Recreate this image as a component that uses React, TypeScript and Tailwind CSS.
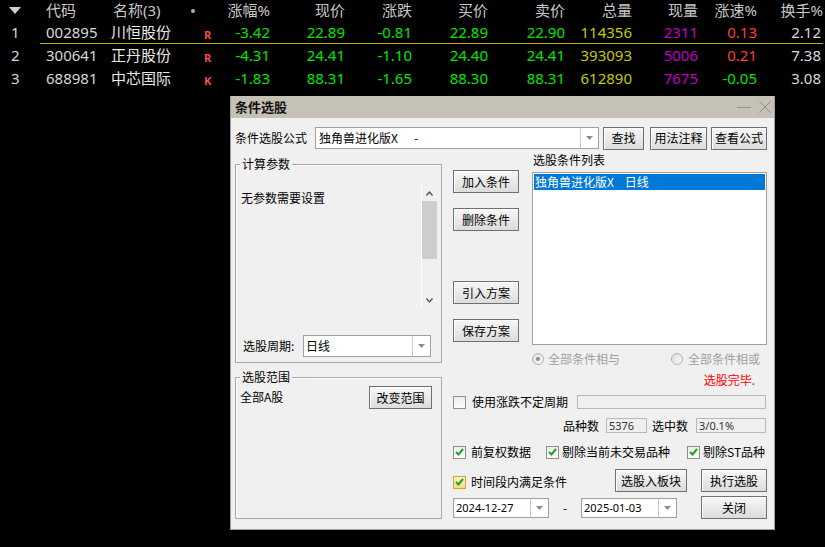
import React from 'react';

const rows = [
  { i: 1, code: '002895', name: '川恒股份', flag: 'R', pct: '-3.42', price: '22.89', chg: '-0.81', bid: '22.89', ask: '22.90', vol: '114356', cur: '2311', spd: '0.13', turn: '2.12' },
  { i: 2, code: '300641', name: '正丹股份', flag: 'R', pct: '-4.31', price: '24.41', chg: '-1.10', bid: '24.40', ask: '24.41', vol: '393093', cur: '5006', spd: '0.21', turn: '7.38' },
  { i: 3, code: '688981', name: '中芯国际', flag: 'K', pct: '-1.83', price: '88.31', chg: '-1.65', bid: '88.30', ask: '88.31', vol: '612890', cur: '7675', spd: '-0.05', turn: '3.08' },
];

const cols = 'grid grid-cols-[70px_80px_25px_55px_75px_67px_76px_77px_67px_66px_59px_66px] items-center';

const Arrow = () => (
  <svg width="7" height="4" viewBox="0 0 7 4">
    <path d="M0 0 L7 0 L3.5 4 Z" fill="#8a8a8a" />
  </svg>
);

const Btn: React.FC<{ label: string; className?: string }> = ({ label, className = '' }) => (
  <div
    className={`flex h-[23px] items-center justify-center border border-[#707070] bg-gradient-to-b from-[#f7f7f7] to-[#dcdcdc] text-black shadow-[inset_1px_1px_0_#fff] ${className}`}
  >
    {label}
  </div>
);

const Combo: React.FC<{ text: string; className?: string; textClass?: string }> = ({ text, className = '', textClass = '' }) => (
  <div className={`flex border border-[#a0a0a0] bg-white ${className}`}>
    <div className={`flex flex-1 items-center whitespace-pre pl-[2px] ${textClass}`}>{text}</div>
    <div className="flex w-[18px] items-center justify-center border-l border-[#c8c8c8]">
      <Arrow />
    </div>
  </div>
);

const Check: React.FC<{ checked?: boolean; hot?: boolean }> = ({ checked, hot }) => (
  <div
    className={`flex h-[13px] w-[13px] shrink-0 items-center justify-center border ${
      hot ? 'border-[#e0a030] bg-gradient-to-b from-[#fdf2c8] to-[#f6d88a]' : 'border-[#8e8f8f] bg-gradient-to-b from-[#eeeeee] to-[#fafafa]'
    }`}
  >
    {checked && (
      <svg width="9" height="8" viewBox="0 0 9 8">
        <path d="M1 4 L3.5 6.5 L8 1" stroke="#21a121" strokeWidth="2" fill="none" />
      </svg>
    )}
  </div>
);

const Radio: React.FC<{ on?: boolean }> = ({ on }) => (
  <div className="flex h-[12px] w-[12px] shrink-0 items-center justify-center rounded-full border border-[#b0b0b0] bg-gradient-to-br from-[#dcdcdc] to-[#fafafa]">
    {on && <div className="h-[4px] w-[4px] rounded-full bg-[#8a8a8a]" />}
  </div>
);

const GroupBox: React.FC<{ title: string; className?: string; boxClass: string; children: React.ReactNode }> = ({ title, className = '', boxClass, children }) => (
  <div className={`relative pt-[7px] ${className}`}>
    <div className={`border border-[#a8a8a8] shadow-[inset_1px_1px_0_#fff] ${boxClass}`}>{children}</div>
    <span className="absolute left-[5px] top-0 bg-[#f0f0f0] px-[2px] leading-[14px]">{title}</span>
  </div>
);

const Field: React.FC<{ text?: string; className?: string }> = ({ text = '', className = '' }) => (
  <div className={`flex items-center border border-[#b8b8b8] bg-[#f0f0f0] pl-[2px] font-['Noto_Sans',sans-serif] text-[11px] text-[#333] ${className}`}>
    {text}
  </div>
);

export default function App() {
  return (
    <div className="relative h-[547px] w-[825px] overflow-hidden bg-black font-['Noto_Sans','Noto_Sans_CJK_SC',sans-serif] text-[15px]">
      {/* quote table */}
      <div className="flex h-[21px] items-center text-[#c8c8c8]">
        <div className="w-[40px] pl-[9px]">
          <svg width="12" height="7" viewBox="0 0 12 7">
            <path d="M0 0 L12 0 L6 7 Z" fill="#d0d0d0" />
          </svg>
        </div>
        <div className={cols}>
          <span className="pl-[6px]">代码</span>
          <span className="pl-[3px]">名称(3)</span>
          <span className="flex pl-[1px]">
            <span className="h-[4px] w-[4px] rounded-full bg-[#b0b0b0]" />
          </span>
          <span className="text-right">涨幅%</span>
          <span className="text-right">现价</span>
          <span className="text-right">涨跌</span>
          <span className="text-right">买价</span>
          <span className="text-right">卖价</span>
          <span className="text-right">总量</span>
          <span className="text-right">现量</span>
          <span className="text-right">涨速%</span>
          <span className="text-right">换手%</span>
        </div>
      </div>
      {rows.map((r) => (
        <div key={r.i} className="flex h-[23px]">
          <div className="flex w-[40px] items-center pl-[11px] text-[#d8d8d8]">{r.i}</div>
          <div className={`${cols} h-full ${r.i === 1 ? 'border-b border-[#b4b400]' : ''}`}>
            <span className="pl-[6px] text-[#d8d8d8]">{r.code}</span>
            <span className="pl-[1px] text-[#e8e8e8]">{r.name}</span>
            <span className="pl-[14px] pt-[5px] text-[11px] font-bold text-[#ff4a4a]">{r.flag}</span>
            <span className="text-right text-[#00e600]">{r.pct}</span>
            <span className="text-right text-[#00e600]">{r.price}</span>
            <span className="text-right text-[#00e600]">{r.chg}</span>
            <span className="text-right text-[#00e600]">{r.bid}</span>
            <span className="text-right text-[#00e600]">{r.ask}</span>
            <span className="text-right text-[#c8c800]">{r.vol}</span>
            <span className="text-right text-[#c000c0]">{r.cur}</span>
            <span className={`text-right ${r.spd.startsWith('-') ? 'text-[#00e600]' : 'text-[#ff3c3c]'}`}>{r.spd}</span>
            <span className="pr-[2px] text-right text-[#d8d8d8]">{r.turn}</span>
          </div>
        </div>
      ))}

      {/* dialog window */}
      <div className="absolute left-[230px] top-[96px] h-[434px] w-[545px] border-x border-b border-[#a0a0a0] bg-[#f0f0f0] font-['Noto_Sans_CJK_SC',sans-serif] text-[12px] leading-[14px] text-black">
        <div className="flex h-[22px] items-center bg-[#c5c1b6] pl-[4px]">
          <span className="text-[13px] font-bold text-[#111]">条件选股</span>
          <div className="ml-auto mr-[3px] flex items-center gap-[8px]">
            <svg width="14" height="10" viewBox="0 0 14 10">
              <path d="M0 5.5 H14" stroke="#8c8c8c" strokeWidth="1" />
            </svg>
            <svg width="12" height="12" viewBox="0 0 12 12">
              <path d="M0.5 0.5 L11.5 11.5 M11.5 0.5 L0.5 11.5" stroke="#8c8c8c" strokeWidth="1" />
            </svg>
          </div>
        </div>

        <div className="pl-[4px] pr-[7px] pt-[9px]">
          {/* formula row */}
          <div className="flex h-[22px] items-center">
            <span className="w-[80px]">条件选股公式</span>
            <Combo text="独角兽进化版X      -" className="h-[22px] w-[284px]" textClass="pl-[3px]" />
            <Btn label="查找" className="ml-[4px] h-[22px] w-[41px]" />
            <Btn label="用法注释" className="ml-[6px] h-[22px] w-[57px]" />
            <Btn label="查看公式" className="ml-[4px] h-[22px] w-[56px]" />
          </div>

          <div className="flex">
            {/* left column */}
            <div className="w-[207px]">
              <GroupBox title="计算参数" className="mt-[8px]" boxClass="h-[199px]">
                <div className="mr-[4px] mt-[20px] flex h-[123px]">
                  <div className="flex-1 pl-[5px] pt-[6px]">无参数需要设置</div>
                  <div className="flex w-[16px] flex-col border-l border-white">
                    <div className="flex h-[16px] items-center justify-center">
                      <svg width="7" height="5" viewBox="0 0 7 5">
                        <path d="M0.5 4.5 L3.5 1 L6.5 4.5" stroke="#505050" strokeWidth="1.3" fill="none" />
                      </svg>
                    </div>
                    <div className="h-[58px] bg-[#cdcdcd]" />
                    <div className="flex-1" />
                    <div className="flex h-[16px] items-center justify-center">
                      <svg width="7" height="5" viewBox="0 0 7 5">
                        <path d="M0.5 0.5 L3.5 4 L6.5 0.5" stroke="#505050" strokeWidth="1.3" fill="none" />
                      </svg>
                    </div>
                  </div>
                </div>
                <div className="mt-[27px] flex items-center pl-[7px]">
                  <span className="w-[60px]">选股周期:</span>
                  <Combo text="日线" className="h-[22px] w-[128px]" />
                </div>
              </GroupBox>

              <GroupBox title="选股范围" className="mt-[7px]" boxClass="h-[142px]">
                <div className="flex items-start justify-between pt-[8px]">
                  <span className="mt-[4px] pl-[4px]">全部A股</span>
                  <Btn label="改变范围" className="mr-[9px] w-[63px]" />
                </div>
              </GroupBox>
            </div>

            {/* right area */}
            <div className="ml-[11px] w-[314px]">
              <div className="flex">
                <div className="flex w-[66px] flex-col">
                  <Btn label="加入条件" className="mt-[21px]" />
                  <Btn label="删除条件" className="mt-[15px]" />
                  <Btn label="引入方案" className="mt-[50px]" />
                  <Btn label="保存方案" className="mt-[15px]" />
                </div>
                <div className="ml-[13px] w-[235px]">
                  <div className="mt-[4px] h-[14px] pl-[1px]">选股条件列表</div>
                  <div className="mt-[5px] h-[173px] border border-[#a0a0a0] bg-white p-[1px]">
                    <div className="h-[16px] whitespace-pre bg-[#0078d7] pl-[1px] leading-[16px] text-white">独角兽进化版X    日线</div>
                  </div>
                  <div className="mt-[7px] flex h-[14px] items-center text-[#a0a0a0]">
                    <Radio on />
                    <span className="ml-[4px]">全部条件相与</span>
                    <div className="ml-auto" />
                    <Radio />
                    <span className="ml-[5px] mr-[7px]">全部条件相或</span>
                  </div>
                </div>
              </div>

              <div className="mt-[7px] h-[14px] pr-[12px] text-right text-[#ff0000]">选股完毕.</div>

              <div className="mt-[8px] flex h-[14px] items-center">
                <Check />
                <span className="ml-[6px]">使用涨跌不定周期</span>
                <Field className="ml-auto mr-[1px] h-[14px] w-[189px]" />
              </div>

              <div className="mt-[9px] flex h-[15px] items-center justify-end">
                <span>品种数</span>
                <Field text="5376" className="ml-[7px] h-[15px] w-[41px]" />
                <span className="ml-[5px]">选中数</span>
                <Field text="3/0.1%" className="ml-[8px] mr-[1px] h-[15px] w-[70px]" />
              </div>

              <div className="mt-[11px] flex h-[16px] items-center">
                <div className="flex w-[93px] items-center">
                  <Check checked />
                  <span className="ml-[5px]">前复权数据</span>
                </div>
                <div className="flex w-[141px] items-center">
                  <Check checked />
                  <span className="ml-[3px]">剔除当前未交易品种</span>
                </div>
                <div className="flex items-center">
                  <Check checked />
                  <span className="ml-[3px]">剔除ST品种</span>
                </div>
              </div>

              <div className="mt-[9px] flex h-[23px] items-center">
                <div className="flex w-[162px] items-center pt-[3px]">
                  <Check checked hot />
                  <span className="ml-[5px]">时间段内满足条件</span>
                </div>
                <Btn label="选股入板块" className="w-[72px]" />
                <Btn label="执行选股" className="ml-[14px] w-[66px]" />
              </div>

              <div className="mt-[4px] flex h-[23px] items-center">
                <Combo text="2024-12-27" className="h-[20px] w-[96px]" textClass="font-['Noto_Sans',sans-serif] text-[11px]" />
                <span className="w-[32px] text-center">-</span>
                <Combo text="2025-01-03" className="h-[20px] w-[96px]" textClass="font-['Noto_Sans',sans-serif] text-[11px]" />
                <Btn label="关闭" className="ml-auto w-[66px]" />
              </div>
            </div>
          </div>
        </div>
      </div>
    </div>
  );
}
